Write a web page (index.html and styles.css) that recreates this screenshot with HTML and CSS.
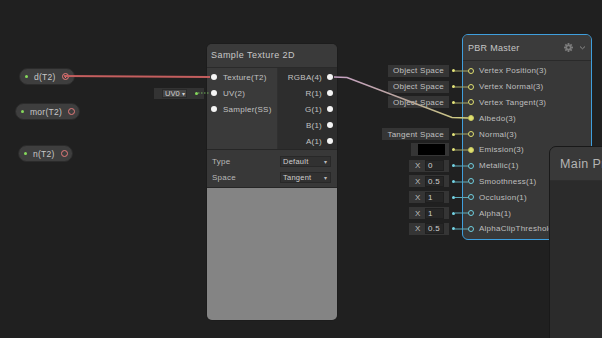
FILE: index.html
```html
<!DOCTYPE html>
<html>
<head>
<meta charset="utf-8">
<link rel="stylesheet" href="styles.css">
</head>
<body>
<div class="canvas">

  <div class="pill pill-d"><span class="pdot"></span><span class="ptext">d(T2)</span><span class="pring on"></span></div>
  <div class="pill pill-mor"><span class="pdot"></span><span class="ptext">mor(T2)</span><span class="pring"></span></div>
  <div class="pill pill-n"><span class="pdot"></span><span class="ptext">n(T2)</span><span class="pring"></span></div>

  <div class="uvfield"><span class="uvbtn">UV0 <span class="arrow">▾</span></span><span class="gdot"></span></div>

  <div class="node st">
    <div class="st-head">Sample Texture 2D</div>
    <div class="st-io">
      <div class="st-in">
        <div class="row"><span class="wport"></span><span>Texture(T2)</span></div>
        <div class="row"><span class="wport"></span><span>UV(2)</span></div>
        <div class="row"><span class="wport"></span><span>Sampler(SS)</span></div>
      </div>
      <div class="st-out">
        <div class="row out"><span>RGBA(4)</span><span class="wport"></span></div>
        <div class="row out"><span>R(1)</span><span class="wport"></span></div>
        <div class="row out"><span>G(1)</span><span class="wport"></span></div>
        <div class="row out"><span>B(1)</span><span class="wport"></span></div>
        <div class="row out"><span>A(1)</span><span class="wport"></span></div>
      </div>
    </div>
    <div class="st-settings">
      <div class="srow"><span class="slabel">Type</span><span class="drop">Default<span class="arrow">▾</span></span></div>
      <div class="srow"><span class="slabel">Space</span><span class="drop">Tangent<span class="arrow">▾</span></span></div>
    </div>
    <div class="st-preview"></div>
  </div>

  <div class="fields">
    <div class="frow"><span class="fbox ftext">Object Space</span><span class="fdot y"></span></div>
    <div class="frow"><span class="fbox ftext">Object Space</span><span class="fdot y"></span></div>
    <div class="frow"><span class="fbox ftext">Object Space</span><span class="fdot y"></span></div>
    <div class="frow"></div>
    <div class="frow"><span class="fbox ftext">Tangent Space</span><span class="fdot y"></span></div>
    <div class="frow"><span class="fbox fcolor"><span class="swatch"></span></span><span class="fdot y"></span></div>
    <div class="frow"><span class="fbox fx"><span class="xl">X</span><span class="xin">0</span></span><span class="fdot c"></span></div>
    <div class="frow"><span class="fbox fx"><span class="xl">X</span><span class="xin">0.5</span></span><span class="fdot c"></span></div>
    <div class="frow"><span class="fbox fx"><span class="xl">X</span><span class="xin">1</span></span><span class="fdot c"></span></div>
    <div class="frow"><span class="fbox fx"><span class="xl">X</span><span class="xin">1</span></span><span class="fdot c"></span></div>
    <div class="frow"><span class="fbox fx"><span class="xl">X</span><span class="xin">0.5</span></span><span class="fdot c"></span></div>
  </div>

  <div class="node pbr">
    <div class="pbr-head">
      <span>PBR Master</span>
      <span class="icons">
        <svg width="9" height="9" viewBox="0 0 9 9"><g fill="#7c7c7c"><rect x="3.6" y="0" width="1.8" height="9"/><rect x="0" y="3.6" width="9" height="1.8"/><rect x="3.6" y="0" width="1.8" height="9" transform="rotate(45 4.5 4.5)"/><rect x="3.6" y="0" width="1.8" height="9" transform="rotate(-45 4.5 4.5)"/></g><circle cx="4.5" cy="4.5" r="3" fill="#7c7c7c"/><circle cx="4.5" cy="4.5" r="1.3" fill="#3b3b3b"/></svg>
        <svg width="7" height="5" viewBox="0 0 7 5"><path d="M1 1.5 L3.5 3.8 L6 1.5" fill="none" stroke="#8a8a8a" stroke-width="1"/></svg>
      </span>
    </div>
    <div class="pbr-rows">
      <div class="prow"><span class="port yr"></span><span>Vertex Position(3)</span></div>
      <div class="prow"><span class="port yr"></span><span>Vertex Normal(3)</span></div>
      <div class="prow"><span class="port yr"></span><span>Vertex Tangent(3)</span></div>
      <div class="prow"><span class="port yf"></span><span>Albedo(3)</span></div>
      <div class="prow"><span class="port yr"></span><span>Normal(3)</span></div>
      <div class="prow"><span class="port yf"></span><span>Emission(3)</span></div>
      <div class="prow"><span class="port cr"></span><span>Metallic(1)</span></div>
      <div class="prow"><span class="port cr"></span><span>Smoothness(1)</span></div>
      <div class="prow"><span class="port cr"></span><span>Occlusion(1)</span></div>
      <div class="prow"><span class="port cr"></span><span>Alpha(1)</span></div>
      <div class="prow"><span class="port cr"></span><span>AlphaClipThreshold(1)</span></div>
    </div>
  </div>

  <svg class="edges" width="602" height="338" viewBox="0 0 602 338">
    <defs>
      <linearGradient id="g1" gradientUnits="userSpaceOnUse" x1="336" y1="0" x2="470" y2="0">
        <stop offset="0" stop-color="#c7a2c4"/>
        <stop offset="0.55" stop-color="#b9a79a"/>
        <stop offset="1" stop-color="#d2d27c"/>
      </linearGradient>
    </defs>
    <path d="M64 76 L210 77" stroke="#c45e5e" stroke-width="2" fill="none"/>
    <path d="M198 93 L210 93" stroke="#73b35c" stroke-width="1.2" stroke-dasharray="1.5 1.5" fill="none"/>
    <path d="M334 77 L347 77.5 L452 117.5 L468 118" stroke="url(#g1)" stroke-width="1.6" fill="none"/>
    <g stroke="#a7a767" stroke-width="1" fill="none">
      <path d="M455 71 L468 71"/>
      <path d="M455 87 L468 87"/>
      <path d="M455 103 L468 103"/>
      <path d="M455 134 L468 134"/>
      <path d="M455 150 L468 150"/>
    </g>
    <g stroke="#5ea8b6" stroke-width="1" fill="none">
      <path d="M455 166 L468 166"/>
      <path d="M455 182 L468 182"/>
      <path d="M455 197.5 L468 197.5"/>
      <path d="M455 213 L468 213"/>
      <path d="M455 229 L468 229"/>
    </g>
  </svg>

  <div class="preview-win">
    <div class="pw-head">Main Preview</div>
    <div class="pw-body"></div>
  </div>
</div>
</body>
</html>
```

FILE: styles.css
```css
* { box-sizing: border-box; }
html, body { margin: 0; padding: 0; background: #202020; }
.canvas {
  position: relative;
  width: 602px;
  height: 338px;
  overflow: hidden;
  background: #202020;
  font-family: "Liberation Sans", Arial, sans-serif;
  font-size: 8px;
  color: #c4c4c4;
  letter-spacing: 0.25px;
}

/* property pills */
.pill {
  position: absolute;
  height: 17px;
  border-radius: 9px;
  background: #3e3e3e;
  border: 1px solid #2b2b2b;
  display: flex;
  align-items: center;
  padding: 0 0 0 5px;
}
.pill-d { left: 19px; top: 68px; width: 56px; }
.pill-mor { left: 15px; top: 103px; width: 65px; }
.pill-n { left: 18px; top: 145px; width: 55px; }
.pdot { width: 3px; height: 3px; border-radius: 50%; background: #86d95c; margin-right: 6px; flex: none; }
.ptext { color: #c8c8c8; font-size: 8.5px; }
.pring {
  width: 7px; height: 7px; border-radius: 50%;
  border: 1.5px solid #e57b7b; background: #3e3e3e; margin-left: 6px; flex: none;
}
.pring.on { background: radial-gradient(circle, #e57b7b 0 1.2px, #3e3e3e 1.3px); }

/* UV field */
.uvfield {
  position: absolute; left: 154px; top: 88px; width: 50px; height: 11px;
  background: #333333; display: flex; align-items: center; padding-left: 8px;
}
.uvbtn {
  height: 9px; width: 25px; background: #464646; border: 1px solid #2a2a2a;
  font-size: 7.5px; line-height: 7px; color: #d0d0d0; padding-left: 2px; letter-spacing: 0;
}
.uvbtn .arrow { font-size: 6px; }
.gdot { width: 3px; height: 3px; border-radius: 50%; background: #86d95c; margin-left: 8px; }

/* Sample Texture node */
.node { position: absolute; }
.st {
  left: 206px; top: 43px; width: 132px;
  border: 1px solid #1c1c1c; border-radius: 6px; overflow: hidden;
  background: #393939;
}
.st-head {
  height: 24px; border-bottom: 1px solid #2a2a2a; background: #3a3a3a;
  font-size: 9px; color: #c8c8c8; padding-left: 4px; line-height: 23px; letter-spacing: 0.45px;
}
.st-io { display: flex; height: 82px; border-bottom: 1px solid #262626; }
.st-in { width: 71px; background: #3a3a3a; padding-top: 1px; border-right: 1px solid #303030; }
.st-out { flex: 1; background: #2d2d2d; padding-top: 1px; }
.row { height: 16px; display: flex; align-items: center; padding-left: 4px; gap: 6px; color: #c2c2c2; }
.row.out { justify-content: flex-end; padding-left: 0; padding-right: 4px; gap: 5px; }
.wport { width: 6px; height: 6px; border-radius: 50%; background: #f4f4f4; flex: none; }
.st-settings { height: 38px; padding-top: 3px; background: #383838; border-bottom: 1px solid #262626; }
.srow { height: 16px; display: flex; align-items: center; padding-left: 5px; }
.slabel { width: 68px; color: #b8b8b8; }
.drop {
  width: 51px; height: 11px; background: #313131; border: 1px solid #282828;
  display: flex; align-items: center; justify-content: space-between;
  padding: 0 3px 0 2px; color: #cfcfcf; font-size: 7.5px;
}
.drop .arrow { font-size: 6px; color: #bbb; }
.st-preview { height: 132px; background: #848484; }

/* inline fields next to PBR master */
.fields {
  position: absolute; right: 143px; top: 63px;
  display: flex; flex-direction: column; align-items: flex-end;
}
.frow { height: 15.8px; display: flex; align-items: center; }
.fbox { height: 12px; background: #353535; display: flex; align-items: center; }
.ftext { padding: 0 5px; color: #c0c0c0; }
.fcolor { width: 38px; height: 13px; padding-left: 7px; }
.swatch { width: 27px; height: 11px; background: #000; }
.fx { width: 40px; padding-left: 6px; }
.xl { width: 10px; color: #bdbdbd; }
.xin {
  width: 19px; height: 11px; background: #262626; border: 1px solid #1f1f1f;
  color: #cfcfcf; padding-left: 2px; line-height: 9px; font-size: 8px;
}
.fdot { width: 3px; height: 3px; border-radius: 50%; margin: 0 4px 0 3px; }
.fdot.y { background: #e5e57a; }
.fdot.c { background: #74d4e4; }

/* PBR master */
.pbr {
  left: 462px; top: 34px; width: 130px; height: 206px;
  border: 1px solid #3f9fdd; border-radius: 6px; overflow: hidden;
  background: #383838;
}
.pbr-head {
  height: 26px; border-bottom: 1px solid #2a2a2a; background: #3b3b3b;
  display: flex; align-items: center; justify-content: space-between;
  padding: 0 5px 0 5px; font-size: 9px; color: #c6c6c6; letter-spacing: 0.3px;
}
.icons { display: flex; align-items: center; gap: 6px; }
.pbr-rows { padding-top: 2px; }
.prow { height: 15.8px; display: flex; align-items: center; padding-left: 5px; gap: 5px; white-space: nowrap; color: #bfbfbf; }
.port { width: 6px; height: 6px; border-radius: 50%; flex: none; }
.port.yr { border: 1.5px solid #e0e070; background: #383838; }
.port.yf { background: #e0e070; border: 1px solid #c8c860; }
.port.cr { border: 1.5px solid #6fd0e0; background: #383838; }

.edges { position: absolute; left: 0; top: 0; pointer-events: none; }

/* Main preview window */
.preview-win {
  position: absolute; left: 549px; top: 146px; width: 80px; height: 210px;
  border: 1px solid #191919; border-top-left-radius: 7px; overflow: hidden;
  background: #2b2b2b;
}
.pw-head {
  height: 34px; background: #393939; border-bottom: 1px solid #2e2e2e;
  font-size: 12.5px; color: #b4b4b4; padding-left: 10px; line-height: 34px;
  white-space: nowrap; letter-spacing: 0.4px;
}
```
